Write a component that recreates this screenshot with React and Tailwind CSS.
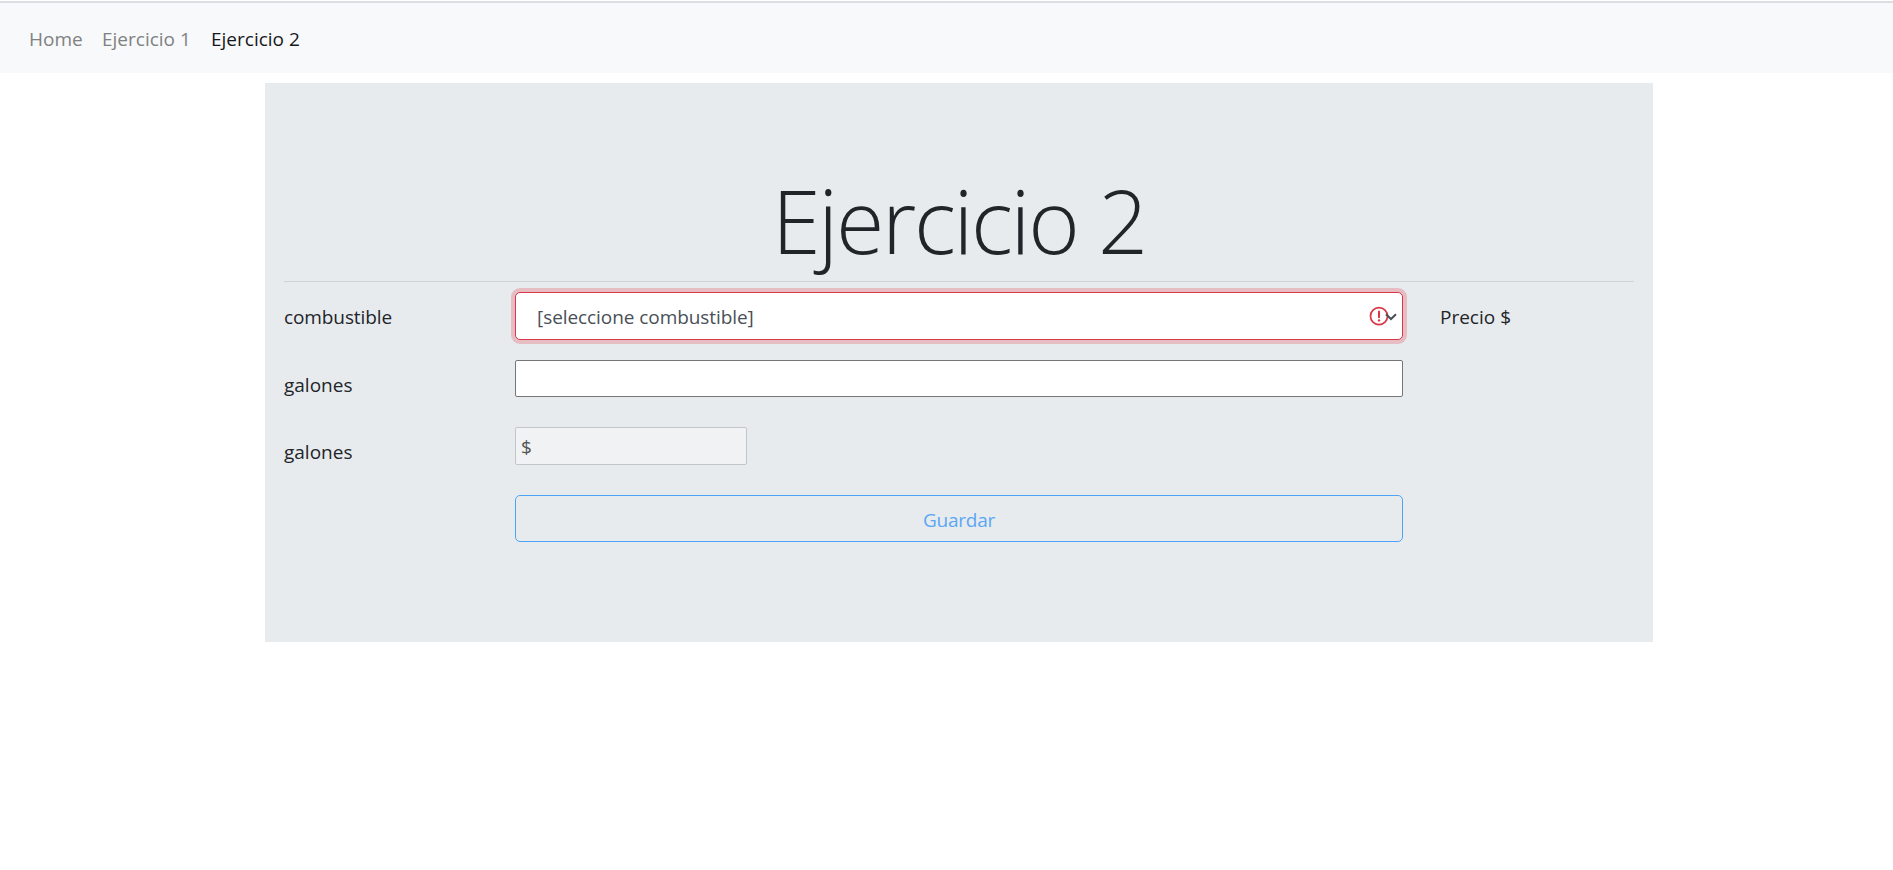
const links = [
  { label: 'Home', style: 'w-[73px] text-[#808182]' },
  { label: 'Ejercicio 1', style: 'w-[109px] text-[#808182]' },
  { label: 'Ejercicio 2', style: 'text-[#17181a]' },
];

function Navbar() {
  return (
    <header className="pt-px">
      <nav className="flex h-[72px] items-center border-t-2 border-[#dbdfe1] bg-[#f8f9fb] pt-0.5 pl-[29px]">
        {links.map((link) => (
          <a key={link.label} href="#" className={`whitespace-nowrap leading-[30px] ${link.style}`}>
            {link.label}
          </a>
        ))}
      </nav>
    </header>
  );
}

function Label({ children, className = '' }) {
  return <label className={`w-[231px] shrink-0 pt-[10px] leading-[30px] ${className}`}>{children}</label>;
}

function FuelSelect() {
  return (
    <button
      type="button"
      className="flex h-12 w-[888px] items-center rounded-[5px] border border-[#dc3545] bg-white pl-[21px] text-left text-[#495057] ring-4 ring-[#dc3545]/25"
    >
      <span className="flex-1 pt-[3px] tracking-[-0.07px]">[seleccione combustible]</span>
      <svg width="35" height="24" viewBox="0 0 35 24" fill="none" className="shrink-0">
        <circle cx="12" cy="12.2" r="8.5" stroke="#dc3545" strokeWidth="1.7" />
        <path d="M12 7.6v5.6" stroke="#dc3545" strokeWidth="2" strokeLinecap="round" />
        <circle cx="12" cy="16.4" r="1.2" fill="#dc3545" />
        <path d="M19 10.2l5 4.8 5-4.8" stroke="#495057" strokeWidth="2" />
      </svg>
    </button>
  );
}

export default function App() {
  return (
    <div className="min-h-screen bg-white font-['Open_Sans',sans-serif] text-[19px] text-[#212529]">
      <Navbar />
      <main className="mt-[10px] ml-[265px] h-[559px] w-[1388px] bg-[#e8ebee] px-[19px] pt-[86px]">
        <h1 className="h-[113px] border-b border-[#cfd3d6] text-center text-[88px] leading-[102px] font-light tracking-[-2.3px] whitespace-nowrap">
          Ejercicio 2
        </h1>
        <form>
          <div className="mt-[10px] flex h-12 items-start">
            <Label className="tracking-[-0.1px]">combustible</Label>
            <FuelSelect />
            <span className="pt-[10px] pl-[37px] leading-[30px]">Precio $</span>
          </div>
          <div className="mt-5 flex h-[37px]">
            <Label>galones</Label>
            <input className="h-[37px] w-[888px] rounded-[2px] border border-[#767676] bg-white px-[5px] outline-none" />
          </div>
          <div className="mt-[30px] flex h-[38px]">
            <Label>galones</Label>
            <input
              disabled
              value="$"
              className="h-[38px] w-[232px] rounded-[2px] border border-[#c3c6c8] bg-[#f0f2f4] px-[5px] pt-0.5 text-[#545454]"
            />
          </div>
          <div className="mt-[30px] pl-[231px]">
            <button
              type="button"
              className="h-[47px] w-[888px] rounded-[5px] border border-[#4da3f5] pt-0.5 leading-[30px] tracking-[-0.25px] text-[#5aa7f5]"
            >
              Guardar
            </button>
          </div>
        </form>
      </main>
    </div>
  );
}
